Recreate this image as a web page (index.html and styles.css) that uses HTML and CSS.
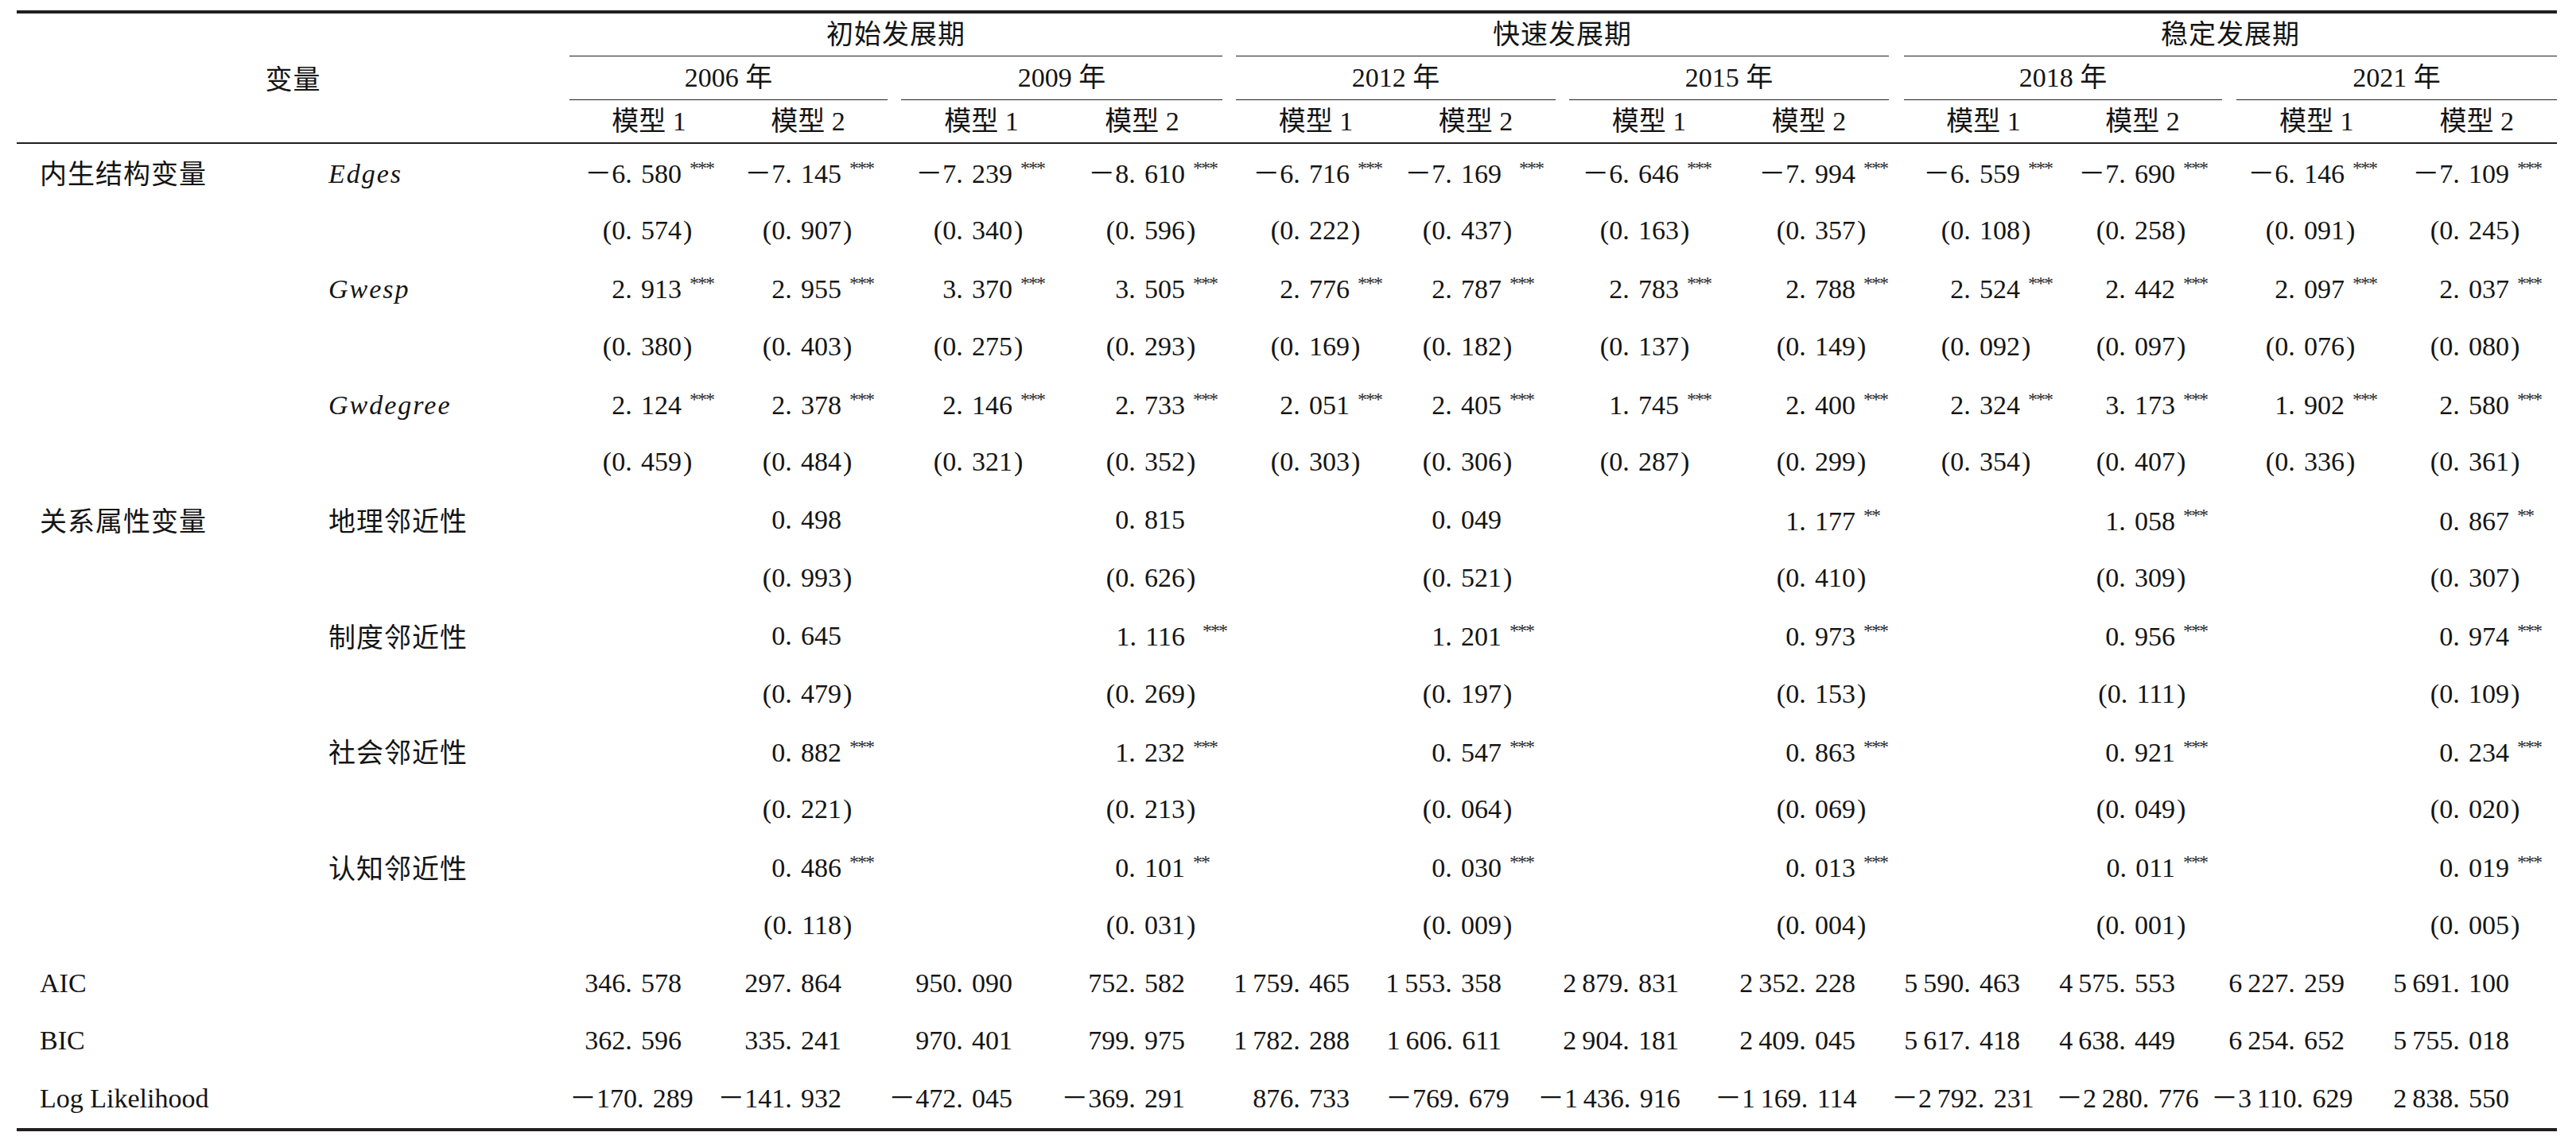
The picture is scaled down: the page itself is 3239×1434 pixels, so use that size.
FILE: index.html
```html
<!DOCTYPE html>
<html lang="zh-CN">
<head>
<meta charset="utf-8">
<title>ERGM 估计结果</title>
<link rel="stylesheet" href="styles.css">
</head>
<body>
<div class="sheet">
<div class="tbl">
  <div class="thead">
    <div class="hvar">变量</div>
    <div class="per g1">初始发展期</div>
    <div class="per g2">快速发展期</div>
    <div class="per g3">稳定发展期</div>
    <div class="yr y1"><div class="yl">2006 年</div><div class="models"><span>模型 1</span><span>模型 2</span></div></div>
    <div class="yr y2"><div class="yl">2009 年</div><div class="models"><span>模型 1</span><span>模型 2</span></div></div>
    <div class="yr y3"><div class="yl">2012 年</div><div class="models"><span>模型 1</span><span>模型 2</span></div></div>
    <div class="yr y4"><div class="yl">2015 年</div><div class="models"><span>模型 1</span><span>模型 2</span></div></div>
    <div class="yr y5"><div class="yl">2018 年</div><div class="models"><span>模型 1</span><span>模型 2</span></div></div>
    <div class="yr y6"><div class="yl">2021 年</div><div class="models"><span>模型 1</span><span>模型 2</span></div></div>
  </div>

  <div class="row">
    <div class="l1">内生结构变量</div><div class="l2"><i>Edges</i></div>
    <div class="c">－6.&#8196;580<span class="st">***</span></div>
    <div class="c">－7.&#8196;145<span class="st">***</span></div>
    <div class="c">－7.&#8196;239<span class="st">***</span></div>
    <div class="c">－8.&#8196;610<span class="st">***</span></div>
    <div class="c">－6.&#8196;716<span class="st">***</span></div>
    <div class="c">－7.&#8196;169<span class="st w">***</span></div>
    <div class="c">－6.&#8196;646<span class="st">***</span></div>
    <div class="c">－7.&#8196;994<span class="st">***</span></div>
    <div class="c">－6.&#8196;559<span class="st">***</span></div>
    <div class="c">－7.&#8196;690<span class="st">***</span></div>
    <div class="c">－6.&#8196;146<span class="st">***</span></div>
    <div class="c">－7.&#8196;109<span class="st">***</span></div>
  </div>
  <div class="row">
    <div class="l1"></div><div class="l2"></div>
    <div class="c">(0.&#8196;574<span class="pr">)</span></div>
    <div class="c">(0.&#8196;907<span class="pr">)</span></div>
    <div class="c">(0.&#8196;340<span class="pr">)</span></div>
    <div class="c">(0.&#8196;596<span class="pr">)</span></div>
    <div class="c">(0.&#8196;222<span class="pr">)</span></div>
    <div class="c">(0.&#8196;437<span class="pr">)</span></div>
    <div class="c">(0.&#8196;163<span class="pr">)</span></div>
    <div class="c">(0.&#8196;357<span class="pr">)</span></div>
    <div class="c">(0.&#8196;108<span class="pr">)</span></div>
    <div class="c">(0.&#8196;258<span class="pr">)</span></div>
    <div class="c">(0.&#8196;091<span class="pr">)</span></div>
    <div class="c">(0.&#8196;245<span class="pr">)</span></div>
  </div>
  <div class="row">
    <div class="l1"></div><div class="l2"><i>Gwesp</i></div>
    <div class="c">2.&#8196;913<span class="st">***</span></div>
    <div class="c">2.&#8196;955<span class="st">***</span></div>
    <div class="c">3.&#8196;370<span class="st">***</span></div>
    <div class="c">3.&#8196;505<span class="st">***</span></div>
    <div class="c">2.&#8196;776<span class="st">***</span></div>
    <div class="c">2.&#8196;787<span class="st">***</span></div>
    <div class="c">2.&#8196;783<span class="st">***</span></div>
    <div class="c">2.&#8196;788<span class="st">***</span></div>
    <div class="c">2.&#8196;524<span class="st">***</span></div>
    <div class="c">2.&#8196;442<span class="st">***</span></div>
    <div class="c">2.&#8196;097<span class="st">***</span></div>
    <div class="c">2.&#8196;037<span class="st">***</span></div>
  </div>
  <div class="row">
    <div class="l1"></div><div class="l2"></div>
    <div class="c">(0.&#8196;380<span class="pr">)</span></div>
    <div class="c">(0.&#8196;403<span class="pr">)</span></div>
    <div class="c">(0.&#8196;275<span class="pr">)</span></div>
    <div class="c">(0.&#8196;293<span class="pr">)</span></div>
    <div class="c">(0.&#8196;169<span class="pr">)</span></div>
    <div class="c">(0.&#8196;182<span class="pr">)</span></div>
    <div class="c">(0.&#8196;137<span class="pr">)</span></div>
    <div class="c">(0.&#8196;149<span class="pr">)</span></div>
    <div class="c">(0.&#8196;092<span class="pr">)</span></div>
    <div class="c">(0.&#8196;097<span class="pr">)</span></div>
    <div class="c">(0.&#8196;076<span class="pr">)</span></div>
    <div class="c">(0.&#8196;080<span class="pr">)</span></div>
  </div>
  <div class="row">
    <div class="l1"></div><div class="l2"><i>Gwdegree</i></div>
    <div class="c">2.&#8196;124<span class="st">***</span></div>
    <div class="c">2.&#8196;378<span class="st">***</span></div>
    <div class="c">2.&#8196;146<span class="st">***</span></div>
    <div class="c">2.&#8196;733<span class="st">***</span></div>
    <div class="c">2.&#8196;051<span class="st">***</span></div>
    <div class="c">2.&#8196;405<span class="st">***</span></div>
    <div class="c">1.&#8196;745<span class="st">***</span></div>
    <div class="c">2.&#8196;400<span class="st">***</span></div>
    <div class="c">2.&#8196;324<span class="st">***</span></div>
    <div class="c">3.&#8196;173<span class="st">***</span></div>
    <div class="c">1.&#8196;902<span class="st">***</span></div>
    <div class="c">2.&#8196;580<span class="st">***</span></div>
  </div>
  <div class="row">
    <div class="l1"></div><div class="l2"></div>
    <div class="c">(0.&#8196;459<span class="pr">)</span></div>
    <div class="c">(0.&#8196;484<span class="pr">)</span></div>
    <div class="c">(0.&#8196;321<span class="pr">)</span></div>
    <div class="c">(0.&#8196;352<span class="pr">)</span></div>
    <div class="c">(0.&#8196;303<span class="pr">)</span></div>
    <div class="c">(0.&#8196;306<span class="pr">)</span></div>
    <div class="c">(0.&#8196;287<span class="pr">)</span></div>
    <div class="c">(0.&#8196;299<span class="pr">)</span></div>
    <div class="c">(0.&#8196;354<span class="pr">)</span></div>
    <div class="c">(0.&#8196;407<span class="pr">)</span></div>
    <div class="c">(0.&#8196;336<span class="pr">)</span></div>
    <div class="c">(0.&#8196;361<span class="pr">)</span></div>
  </div>

  <div class="row">
    <div class="l1">关系属性变量</div><div class="l2">地理邻近性</div>
    <div class="c"></div><div class="c">0.&#8196;498</div>
    <div class="c"></div><div class="c">0.&#8196;815</div>
    <div class="c"></div><div class="c">0.&#8196;049</div>
    <div class="c"></div><div class="c">1.&#8196;177<span class="st">**</span></div>
    <div class="c"></div><div class="c">1.&#8196;058<span class="st">***</span></div>
    <div class="c"></div><div class="c">0.&#8196;867<span class="st">**</span></div>
  </div>
  <div class="row">
    <div class="l1"></div><div class="l2"></div>
    <div class="c"></div><div class="c">(0.&#8196;993<span class="pr">)</span></div>
    <div class="c"></div><div class="c">(0.&#8196;626<span class="pr">)</span></div>
    <div class="c"></div><div class="c">(0.&#8196;521<span class="pr">)</span></div>
    <div class="c"></div><div class="c">(0.&#8196;410<span class="pr">)</span></div>
    <div class="c"></div><div class="c">(0.&#8196;309<span class="pr">)</span></div>
    <div class="c"></div><div class="c">(0.&#8196;307<span class="pr">)</span></div>
  </div>
  <div class="row">
    <div class="l1"></div><div class="l2">制度邻近性</div>
    <div class="c"></div><div class="c">0.&#8196;645</div>
    <div class="c"></div><div class="c">1.&#8196;116<span class="st w">***</span></div>
    <div class="c"></div><div class="c">1.&#8196;201<span class="st">***</span></div>
    <div class="c"></div><div class="c">0.&#8196;973<span class="st">***</span></div>
    <div class="c"></div><div class="c">0.&#8196;956<span class="st">***</span></div>
    <div class="c"></div><div class="c">0.&#8196;974<span class="st">***</span></div>
  </div>
  <div class="row">
    <div class="l1"></div><div class="l2"></div>
    <div class="c"></div><div class="c">(0.&#8196;479<span class="pr">)</span></div>
    <div class="c"></div><div class="c">(0.&#8196;269<span class="pr">)</span></div>
    <div class="c"></div><div class="c">(0.&#8196;197<span class="pr">)</span></div>
    <div class="c"></div><div class="c">(0.&#8196;153<span class="pr">)</span></div>
    <div class="c"></div><div class="c">(0.&#8196;111<span class="pr">)</span></div>
    <div class="c"></div><div class="c">(0.&#8196;109<span class="pr">)</span></div>
  </div>
  <div class="row">
    <div class="l1"></div><div class="l2">社会邻近性</div>
    <div class="c"></div><div class="c">0.&#8196;882<span class="st">***</span></div>
    <div class="c"></div><div class="c">1.&#8196;232<span class="st">***</span></div>
    <div class="c"></div><div class="c">0.&#8196;547<span class="st">***</span></div>
    <div class="c"></div><div class="c">0.&#8196;863<span class="st">***</span></div>
    <div class="c"></div><div class="c">0.&#8196;921<span class="st">***</span></div>
    <div class="c"></div><div class="c">0.&#8196;234<span class="st">***</span></div>
  </div>
  <div class="row">
    <div class="l1"></div><div class="l2"></div>
    <div class="c"></div><div class="c">(0.&#8196;221<span class="pr">)</span></div>
    <div class="c"></div><div class="c">(0.&#8196;213<span class="pr">)</span></div>
    <div class="c"></div><div class="c">(0.&#8196;064<span class="pr">)</span></div>
    <div class="c"></div><div class="c">(0.&#8196;069<span class="pr">)</span></div>
    <div class="c"></div><div class="c">(0.&#8196;049<span class="pr">)</span></div>
    <div class="c"></div><div class="c">(0.&#8196;020<span class="pr">)</span></div>
  </div>
  <div class="row">
    <div class="l1"></div><div class="l2">认知邻近性</div>
    <div class="c"></div><div class="c">0.&#8196;486<span class="st">***</span></div>
    <div class="c"></div><div class="c">0.&#8196;101<span class="st">**</span></div>
    <div class="c"></div><div class="c">0.&#8196;030<span class="st">***</span></div>
    <div class="c"></div><div class="c">0.&#8196;013<span class="st">***</span></div>
    <div class="c"></div><div class="c">0.&#8196;011<span class="st">***</span></div>
    <div class="c"></div><div class="c">0.&#8196;019<span class="st">***</span></div>
  </div>
  <div class="row">
    <div class="l1"></div><div class="l2"></div>
    <div class="c"></div><div class="c">(0.&#8196;118<span class="pr">)</span></div>
    <div class="c"></div><div class="c">(0.&#8196;031<span class="pr">)</span></div>
    <div class="c"></div><div class="c">(0.&#8196;009<span class="pr">)</span></div>
    <div class="c"></div><div class="c">(0.&#8196;004<span class="pr">)</span></div>
    <div class="c"></div><div class="c">(0.&#8196;001<span class="pr">)</span></div>
    <div class="c"></div><div class="c">(0.&#8196;005<span class="pr">)</span></div>
  </div>

  <div class="row">
    <div class="l1 en">AIC</div><div class="l2"></div>
    <div class="c">346.&#8196;578</div>
    <div class="c">297.&#8196;864</div>
    <div class="c">950.&#8196;090</div>
    <div class="c">752.&#8196;582</div>
    <div class="c">1&#8201;759.&#8196;465</div>
    <div class="c">1&#8201;553.&#8196;358</div>
    <div class="c">2&#8201;879.&#8196;831</div>
    <div class="c">2&#8201;352.&#8196;228</div>
    <div class="c">5&#8201;590.&#8196;463</div>
    <div class="c">4&#8201;575.&#8196;553</div>
    <div class="c">6&#8201;227.&#8196;259</div>
    <div class="c">5&#8201;691.&#8196;100</div>
  </div>
  <div class="row">
    <div class="l1 en">BIC</div><div class="l2"></div>
    <div class="c">362.&#8196;596</div>
    <div class="c">335.&#8196;241</div>
    <div class="c">970.&#8196;401</div>
    <div class="c">799.&#8196;975</div>
    <div class="c">1&#8201;782.&#8196;288</div>
    <div class="c">1&#8201;606.&#8196;611</div>
    <div class="c">2&#8201;904.&#8196;181</div>
    <div class="c">2&#8201;409.&#8196;045</div>
    <div class="c">5&#8201;617.&#8196;418</div>
    <div class="c">4&#8201;638.&#8196;449</div>
    <div class="c">6&#8201;254.&#8196;652</div>
    <div class="c">5&#8201;755.&#8196;018</div>
  </div>
  <div class="row">
    <div class="l1 en">Log Likelihood</div><div class="l2"></div>
    <div class="c">－170.&#8196;289</div>
    <div class="c">－141.&#8196;932</div>
    <div class="c">－472.&#8196;045</div>
    <div class="c">－369.&#8196;291</div>
    <div class="c">876.&#8196;733</div>
    <div class="c">－769.&#8196;679</div>
    <div class="c">－1&#8201;436.&#8196;916</div>
    <div class="c">－1&#8201;169.&#8196;114</div>
    <div class="c">－2&#8201;792.&#8196;231</div>
    <div class="c">－2&#8201;280.&#8196;776</div>
    <div class="c">－3&#8201;110.&#8196;629</div>
    <div class="c">2&#8201;838.&#8196;550</div>
  </div>
</div>
</div>
</body>
</html>
```

FILE: styles.css
```css
* {
  box-sizing: border-box;
}

html,
body {
  margin: 0;
  padding: 0;
  background: #ffffff;
}

body {
  font-family: "Liberation Serif", "Noto Sans CJK SC", serif;
  font-size: 34px;
  color: #141414;
}

.sheet {
  width: 3239px;
  padding: 13px 24px 0 21px;
}

.tbl {
  width: 3194px;
  border-top: 4px solid #231f20;
  border-bottom: 4px solid #231f20;
}

/* ---------- header ---------- */
.thead {
  display: grid;
  grid-template-columns: 695px 200px 200px 17px 202px 202px 17px 201px 201px 17px 201px 201px 19px 200px 200px 18px 201px 202px;
  grid-template-rows: 54px 108px;
  border-bottom: 2px solid #231f20;
  line-height: 1;
}

.hvar {
  grid-row: 1 / 3;
  grid-column: 1;
  display: flex;
  align-items: center;
  justify-content: center;
  font-family: "Noto Sans CJK SC", sans-serif;
  letter-spacing: 1px;
}

.per {
  grid-row: 1;
  display: flex;
  align-items: center;
  justify-content: center;
  border-bottom: 1.5px solid #231f20;
  letter-spacing: 1px;
}

.g1 { grid-column: 2 / 7; }
.g2 { grid-column: 8 / 13; }
.g3 { grid-column: 14 / 19; }

.yr {
  grid-row: 2;
  display: flex;
  flex-direction: column;
}

.y1 { grid-column: 2 / 4; }
.y2 { grid-column: 5 / 7; }
.y3 { grid-column: 8 / 10; }
.y4 { grid-column: 11 / 13; }
.y5 { grid-column: 14 / 16; }
.y6 { grid-column: 17 / 19; }

.yl {
  height: 55px;
  display: flex;
  align-items: center;
  justify-content: center;
  border-bottom: 1.5px solid #231f20;
}

.models {
  flex: 1;
  display: flex;
}

.models span {
  flex: 1;
  display: flex;
  align-items: center;
  justify-content: center;
}

/* ---------- body rows ---------- */
.row {
  display: grid;
  grid-template-columns: 392px 303px 186px 201px 215px 217px 207px 191px 223px 222px 207px 195px 213px 207px;
  height: 72.8px;
  align-items: center;
  line-height: 1;
}

.l1 {
  padding-left: 29px;
  font-family: "Noto Sans CJK SC", sans-serif;
  letter-spacing: 1px;
  white-space: nowrap;
}

.l1.en {
  font-family: "Liberation Serif", serif;
  letter-spacing: 0;
}

.l2 {
  font-family: "Noto Sans CJK SC", sans-serif;
  letter-spacing: 1px;
  white-space: nowrap;
}

.l2 i {
  font-family: "Liberation Serif", serif;
  letter-spacing: 2px;
}

.c {
  text-align: right;
  padding-right: 45px;
  white-space: nowrap;
}

.st {
  display: inline-block;
  width: 0;
  text-align: left;
  text-indent: 10px;
  font-size: 24px;
  letter-spacing: -2px;
  vertical-align: 11px;
  color: #2a2a2a;
}

.st.w {
  text-indent: 22px;
}

.pr {
  display: inline-block;
  width: 0;
  text-align: left;
  text-indent: 2px;
}
```
